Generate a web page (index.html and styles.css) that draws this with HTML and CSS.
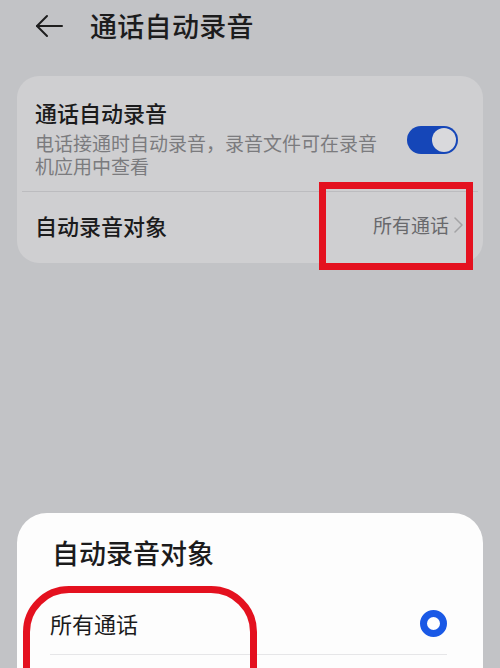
FILE: index.html
```
<!DOCTYPE html>
<html lang="zh-CN">
<head>
<meta charset="utf-8">
<title>通话自动录音</title>
<link rel="stylesheet" href="styles.css">
</head>
<body>
<div class="app">
  <header class="header">
    <svg class="back" width="28" height="24" viewBox="0 0 28 24" fill="none" stroke="#1e1e1e" stroke-width="2" stroke-linecap="round" stroke-linejoin="round">
      <path d="M12 2 L2 12 L12 22"/>
      <path d="M2 12 H27"/>
    </svg>
    <h1 class="title">通话自动录音</h1>
  </header>

  <section class="card">
    <div class="row row-switch">
      <div class="row-text">
        <div class="row-title">通话自动录音</div>
        <div class="row-sub">电话接通时自动录音，录音文件可在录音机应用中查看</div>
      </div>
      <div class="switch"><span class="knob"></span></div>
    </div>
    <div class="divider"></div>
    <div class="row row-link">
      <div class="row-title">自动录音对象</div>
      <div class="row-value">所有通话
        <svg class="chev" width="9" height="16" viewBox="0 0 9 16" fill="none" stroke="#a3a3a5" stroke-width="1.5" stroke-linecap="round" stroke-linejoin="round"><path d="M1 1 L8 8 L1 15"/></svg>
      </div>
    </div>
    <span class="mark mark-rect"></span>
  </section>

  <section class="sheet">
    <h2 class="sheet-title">自动录音对象</h2>
    <div class="option">
      <span class="option-label">所有通话</span>
      <span class="radio"></span>
    </div>
    <div class="sheet-divider"></div>
    <span class="mark mark-loop"></span>
  </section>
</div>
</body>
</html>
```
FILE: styles.css
```
* { box-sizing: border-box; }
html, body { margin: 0; padding: 0; }
body {
  background: #c2c3c6;
  font-family: "Noto Sans CJK SC", "Noto Sans", sans-serif;
  color: #1b1b1c;
}
.app {
  width: 500px;
  height: 668px;
  overflow: hidden;
  display: flex;
  flex-direction: column;
  position: relative;
}
.header {
  height: 52px;
  display: flex;
  align-items: center;
  padding-left: 35px;
  flex-shrink: 0;
}
.back { display: block; }
.title {
  margin: 0 0 0 27px;
  font-size: 27px;
  font-weight: 500;
  line-height: 36px;
  letter-spacing: 0.3px;
  color: #1c1c1d;
}
.card {
  position: relative;
  margin: 24px 17px 0;
  background: #cfcfd1;
  border-radius: 22px;
  flex-shrink: 0;
}
.row { display: flex; align-items: center; }
.row-switch {
  padding: 19px 25px 13px 18px;
  height: 115px;
}
.row-text { flex: 1; min-width: 0; }
.row-title {
  font-size: 22px;
  line-height: 30px;
  font-weight: 500;
  color: #1b1b1c;
}
.row-sub {
  margin-top: 4px;
  font-size: 19px;
  line-height: 23px;
  color: #7b7b7e;
  width: 352px;
}
.switch {
  width: 51px;
  height: 28px;
  border-radius: 14px;
  background: #1546b8;
  margin-left: 24px;
  margin-top: 6px;
  position: relative;
  flex-shrink: 0;
}
.knob {
  position: absolute;
  right: 2px;
  top: 2px;
  width: 24px;
  height: 24px;
  border-radius: 50%;
  background: #d9d9dc;
}
.divider {
  height: 1px;
  background: #bcbcbf;
  margin: 0 5px;
}
.row-link {
  height: 71px;
  padding: 0 20px 6px 18px;
  justify-content: space-between;
}
.row-value {
  display: flex;
  align-items: center;
  gap: 5px;
  font-size: 19px;
  line-height: 26px;
  color: #69696c;
}
.chev { display: block; }
.mark {
  position: absolute;
  border: 7px solid #e4111f;
  pointer-events: none;
}
.mark-rect {
  left: 302px;
  top: 106px;
  width: 154px;
  height: 88px;
}
.sheet {
  position: relative;
  margin: 250px 17px 0;
  background: #fdfdfd;
  border-radius: 30px 30px 0 0;
  flex: 1;
  padding: 22px 36px 0 33px;
}
.sheet-title {
  margin: 0 0 0 2px;
  font-size: 27px;
  line-height: 36px;
  font-weight: 500;
  color: #1b1b1c;
}
.option {
  display: flex;
  align-items: center;
  justify-content: space-between;
  height: 61px;
  margin-top: 22px;
  padding-bottom: 2px;
}
.option-label {
  font-size: 22px;
  line-height: 30px;
  color: #1b1b1c;
}
.radio {
  width: 27px;
  height: 27px;
  border-radius: 50%;
  border: 7px solid #1a59e6;
  background: #fff;
  margin-top: 2px;
}
.sheet-divider {
  height: 1px;
  background: #e6e6e8;
}
.mark-loop {
  left: 6px;
  top: 73px;
  width: 234px;
  height: 200px;
  border-radius: 46px 46px 0 0;
}
```
